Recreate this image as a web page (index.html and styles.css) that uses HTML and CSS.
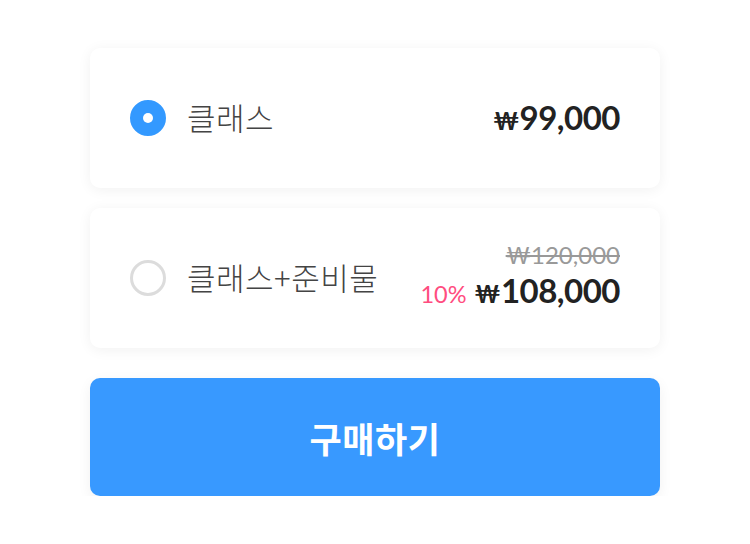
FILE: index.html
```html
<!DOCTYPE html>
<html lang="ko">
<head>
<meta charset="utf-8">
<link rel="stylesheet" href="styles.css">
</head>
<body>
<div class="wrap">
  <label class="option">
    <span class="radio checked"></span>
    <span class="name">클래스</span>
    <span class="prices single">
      <span class="price"><span class="won">₩</span>99,000</span>
    </span>
  </label>
  <label class="option">
    <span class="radio"></span>
    <span class="name">클래스+준비물</span>
    <span class="prices">
      <span class="old">₩120,000</span>
      <span class="row"><span class="rate">10%</span><span class="price"><span class="won">₩</span>108,000</span></span>
    </span>
  </label>
  <button class="buy">구매하기</button>
</div>
</body>
</html>
```
FILE: styles.css
```css
html, body { margin: 0; padding: 0; background: #fff; }
body { font-family: Lato, "Noto Sans CJK KR", sans-serif; }
.wrap {
  width: 570px;
  margin: 48px auto 0;
  display: flex;
  flex-direction: column;
  gap: 20px;
}
.option {
  height: 140px;
  box-sizing: border-box;
  padding: 0 40px;
  background: #fff;
  border-radius: 10px;
  box-shadow: 0 2px 14px rgba(0,0,0,0.06);
  display: flex;
  align-items: center;
}
.radio {
  width: 36px; height: 36px;
  box-sizing: border-box;
  border-radius: 50%;
  border: 3px solid #dcdcdc;
  flex: none;
  display: flex; align-items: center; justify-content: center;
}
.radio.checked { background: #3399ff; border-color: #3399ff; }
.radio.checked::after {
  content: ""; width: 10px; height: 10px; border-radius: 50%; background: #fff;
}
.name {
  margin-left: 21px;
  margin-bottom: 4px;
  font-family: "Noto Sans CJK KR", sans-serif;
  font-weight: 300;
  font-size: 31px;
  letter-spacing: 0.5px;
  color: #444;
  flex: 1;
}
.prices {
  display: flex; flex-direction: column; align-items: flex-end;
}
.prices.single { margin-bottom: 2px; }
.price {
  font-family: Lato, sans-serif;
  font-weight: 700;
  font-size: 33px;
  color: #222;
  letter-spacing: -0.5px;
}
.won { font-size: 24px; margin-right: 1px; }
.old {
  font-family: Lato, sans-serif;
  font-size: 24px;
  color: #999;
  text-decoration: line-through;
  line-height: 28px;
}
.row { display: flex; align-items: baseline; }
.rate { font-size: 23.5px; color: #ff4d7f; margin-right: 8px; }
.row .price { line-height: 42px; }
.buy {
  margin-top: 10px;
  height: 118px;
  border: 0;
  border-radius: 10px;
  background: #3899ff;
  color: #fff;
  font-family: "Noto Sans CJK KR", sans-serif;
  font-weight: 700;
  font-size: 35px;
  letter-spacing: 0.5px;
  box-shadow: 0 4px 14px rgba(0,0,0,0.06);
}
```
